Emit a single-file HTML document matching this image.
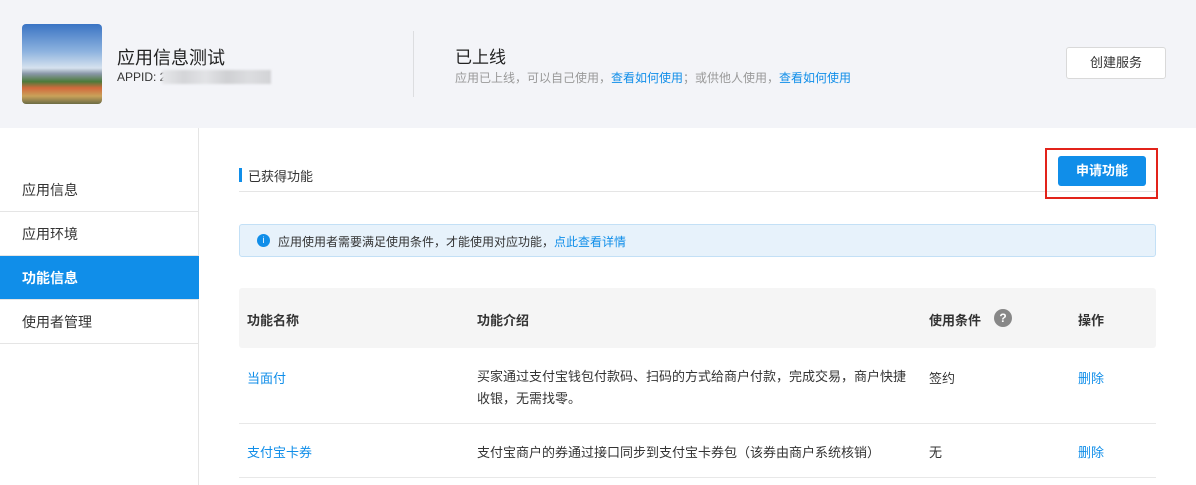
<!DOCTYPE html>
<html><head><meta charset="utf-8"><style>
*{margin:0;padding:0;box-sizing:border-box}
body{width:1196px;height:485px;overflow:hidden;background:#fff;font-family:"Liberation Sans","Noto Sans CJK SC",sans-serif;color:#333;position:relative}
.a{position:absolute;white-space:nowrap}
.hd{position:absolute;left:0;top:0;width:1196px;height:128px;background:#f3f4f8}
.blue{color:#108ee9}
.nav{position:absolute;left:0;width:199px;height:44px;border-bottom:1px solid #e5e5e5;font-size:14px;line-height:44px;padding-left:22px;color:#333}
</style></head><body>
<div class="hd"></div>
<div class="a" style="left:22px;top:24px;width:80px;height:80px;border-radius:4px;overflow:hidden;background:linear-gradient(#3a74c4 0%,#8fb4df 35%,#d6e2ee 55%,#8a98a8 62%,#4c7a3a 72%,#d26a3c 80%,#c9a25a 90%,#6b6b45 100%)"></div>
<div class="a" style="left:117px;top:44px;font-size:18px;color:#222">应用信息测试</div>
<div class="a" style="left:117px;top:70px;font-size:12px;color:#333">APPID: 2</div>
<div class="a" style="left:162px;top:70px;width:109px;height:14px;background:linear-gradient(90deg,#e6e7ea,#d4d5d8,#e2e3e6,#cfd0d3,#dcdde0,#d2d3d6);filter:blur(1px)"></div>
<div class="a" style="left:413px;top:31px;width:1px;height:66px;background:#dcdde0"></div>
<div class="a" style="left:455px;top:43px;font-size:17px;color:#222">已上线</div>
<div class="a" style="left:455px;top:69px;font-size:12px;color:#999">应用已上线，可以自己使用，<span class="blue">查看如何使用</span>；或供他人使用，<span class="blue">查看如何使用</span></div>
<div class="a" style="left:1066px;top:47px;width:100px;height:32px;border:1px solid #d9d9d9;border-radius:3px;background:#fff;font-size:13px;line-height:30px;text-align:center;color:#333">创建服务</div>

<div class="a" style="left:198px;top:128px;width:1px;height:357px;background:#e5e5e5"></div>
<div class="nav" style="top:168px">应用信息</div>
<div class="nav" style="top:212px">应用环境</div>
<div class="nav" style="top:256px;background:#108ee9;color:#fff;font-weight:bold">功能信息</div>
<div class="nav" style="top:300px">使用者管理</div>

<div class="a" style="left:239px;top:168px;width:3px;height:14px;background:#108ee9"></div>
<div class="a" style="left:248px;top:166px;font-size:13px;color:#333">已获得功能</div>
<div class="a" style="left:239px;top:191px;width:917px;height:1px;background:#e5e5e5"></div>
<div class="a" style="left:1045px;top:148px;width:113px;height:51px;border:2px solid #e2231a"></div>
<div class="a" style="left:1058px;top:156px;width:88px;height:30px;background:#108ee9;border-radius:3px;color:#fff;font-size:13px;font-weight:bold;line-height:30px;text-align:center">申请功能</div>

<div class="a" style="left:239px;top:224px;width:917px;height:33px;background:#e7f2fb;border:1px solid #c3e0f6;border-radius:3px"></div>
<div class="a" style="left:257px;top:234px;width:13px;height:13px;border-radius:50%;background:#108ee9;color:#fff;font-size:9px;line-height:13px;text-align:center">i</div>
<div class="a" style="left:278px;top:233px;font-size:12px;color:#333">应用使用者需要满足使用条件，才能使用对应功能，<span class="blue">点此查看详情</span></div>

<div class="a" style="left:239px;top:288px;width:917px;height:60px;background:#f5f5f5;border-radius:3px"></div>
<div class="a" style="left:247px;top:310px;font-size:13px;font-weight:bold">功能名称</div>
<div class="a" style="left:477px;top:310px;font-size:13px;font-weight:bold">功能介绍</div>
<div class="a" style="left:929px;top:310px;font-size:13px;font-weight:bold">使用条件</div>
<div class="a" style="left:994px;top:309px;width:18px;height:18px;border-radius:50%;background:#888;color:#fff;font-size:12px;line-height:18px;text-align:center;font-weight:bold">?</div>
<div class="a" style="left:1078px;top:310px;font-size:13px;font-weight:bold">操作</div>

<div class="a blue" style="left:247px;top:368px;font-size:13px">当面付</div>
<div class="a" style="left:477px;top:366px;font-size:13px;line-height:22px;white-space:normal;width:432px">买家通过支付宝钱包付款码、扫码的方式给商户付款，完成交易，商户快捷收银，无需找零。</div>
<div class="a" style="left:929px;top:368px;font-size:13px">签约</div>
<div class="a blue" style="left:1078px;top:368px;font-size:13px">删除</div>
<div class="a" style="left:239px;top:423px;width:917px;height:1px;background:#e8e8e8"></div>
<div class="a blue" style="left:247px;top:442px;font-size:13px">支付宝卡券</div>
<div class="a" style="left:477px;top:442px;font-size:13px">支付宝商户的券通过接口同步到支付宝卡券包（该券由商户系统核销）</div>
<div class="a" style="left:929px;top:442px;font-size:13px">无</div>
<div class="a blue" style="left:1078px;top:442px;font-size:13px">删除</div>
<div class="a" style="left:239px;top:477px;width:917px;height:1px;background:#e8e8e8"></div>
</body></html>
